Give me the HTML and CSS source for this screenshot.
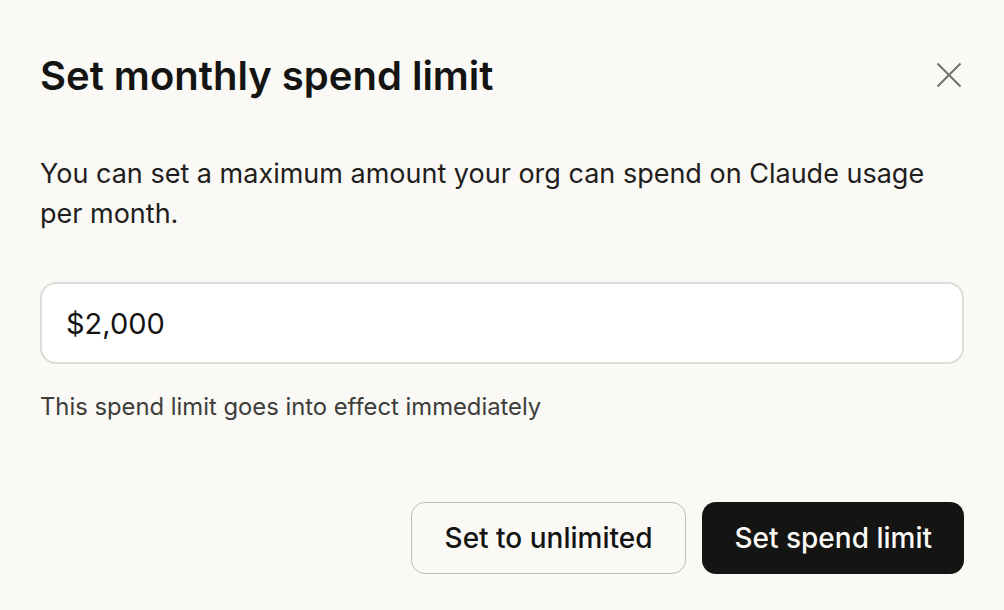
FILE: index.html
```html
<!DOCTYPE html>
<html lang="en">
<head>
    <meta charset="UTF-8">
    <meta name="viewport" content="width=device-width, initial-scale=1.0">
    <title>Set monthly spend limit</title>
    <link rel="stylesheet" href="styles.css">
</head>
<body>
    <div class="dialog">
        <div class="dialog-header">
            <h1>Set monthly spend limit</h1>
            <button class="close-btn" aria-label="Close">
                <svg width="28" height="28" viewBox="0 0 28 28" fill="none">
                    <path d="M2.5 2.5L25.5 25.5M25.5 2.5L2.5 25.5" stroke="#73726c" stroke-width="2"/>
                </svg>
            </button>
        </div>

        <p class="description">You can set a maximum amount your org can spend on Claude usage per month.</p>

        <input type="text" class="amount-input" value="$2,000">
        <p class="hint">This spend limit goes into effect immediately</p>

        <div class="actions">
            <button class="btn btn-secondary">Set to unlimited</button>
            <button class="btn btn-primary">Set spend limit</button>
        </div>
    </div>
</body>
</html>
```

FILE: styles.css
```css
* {
    margin: 0;
    padding: 0;
    box-sizing: border-box;
}

body {
    font-family: 'Inter', 'Noto Sans', sans-serif;
    background: #faf9f5;
    color: #141413;
    width: 1004px;
    height: 610px;
    overflow: hidden;
}

.dialog {
    padding: 50px 40px 36px 40px;
}

.dialog-header {
    display: flex;
    justify-content: space-between;
    align-items: center;
    height: 50px;
}

h1 {
    font-size: 40px;
    font-weight: 600;
    letter-spacing: 0;
}

.close-btn {
    background: none;
    border: none;
    margin-right: 1px;
    display: flex;
}

.description {
    margin-top: 54px;
    font-size: 27px;
    line-height: 40px;
    color: #1f1e1d;
    max-width: 900px;
}

.amount-input {
    display: block;
    width: 100%;
    height: 82px;
    margin-top: 48px;
    padding: 0 24px;
    font-family: inherit;
    font-size: 29px;
    color: #141413;
    background: #fff;
    border: 2px solid #dedcd6;
    border-radius: 16px;
    outline: none;
}

.hint {
    margin-top: 28px;
    font-size: 23.8px;
    color: #3d3d3a;
}

.actions {
    display: flex;
    justify-content: flex-end;
    gap: 16px;
    margin-top: 81px;
}

.btn {
    height: 72px;
    padding: 0 32px;
    font-family: inherit;
    font-size: 28px;
    font-weight: 500;
    border-radius: 14px;
    cursor: pointer;
}

.btn-secondary {
    background: transparent;
    color: #141413;
    border: 1.5px solid #bfbdb6;
    padding: 0 33px;
}

.btn-primary {
    background: #141413;
    color: #faf9f5;
    border: none;
}
```
